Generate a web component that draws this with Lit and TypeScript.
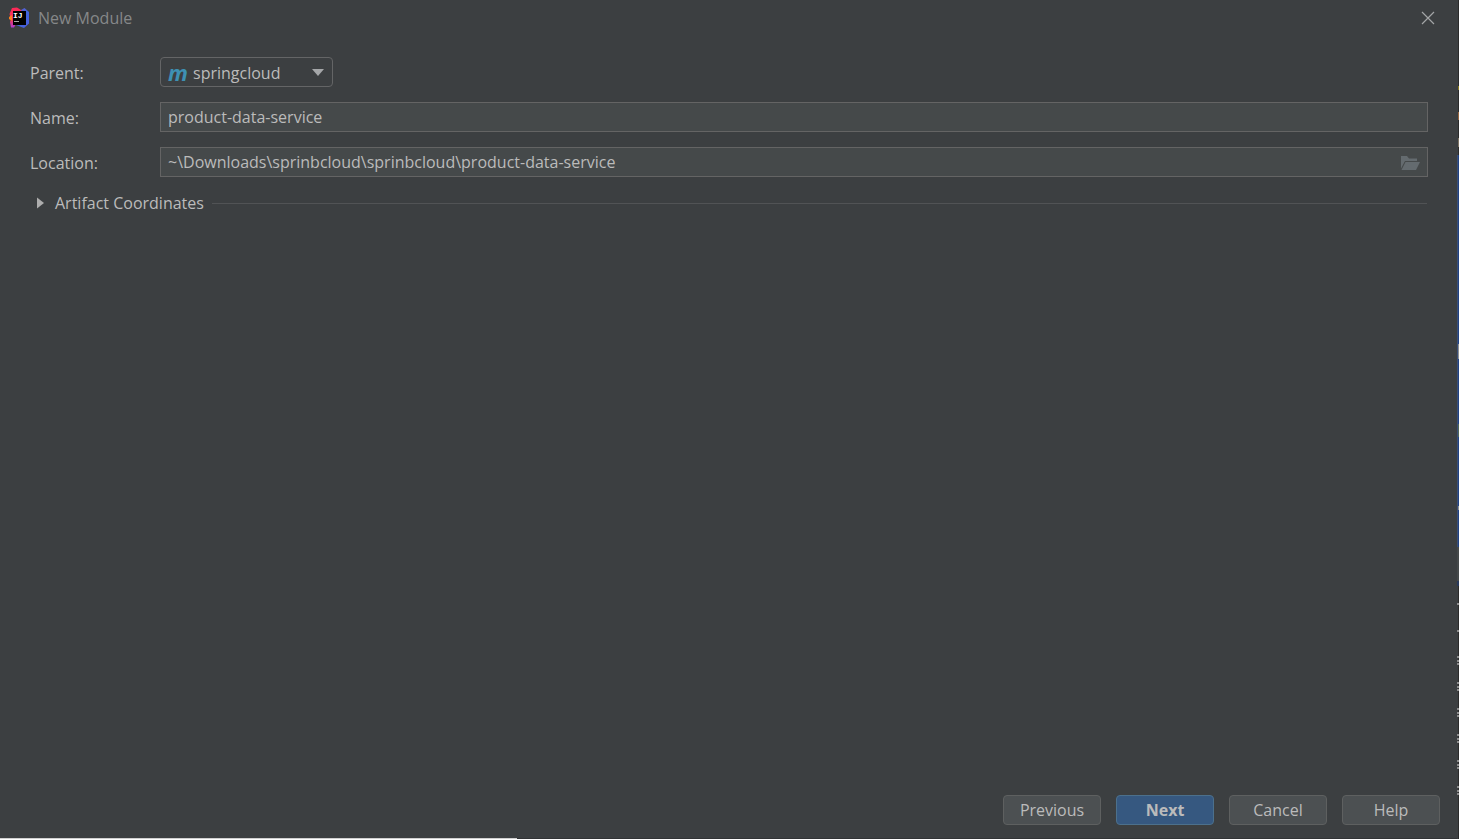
import { LitElement, html, css, svg } from "lit";
import { customElement, state } from "lit/decorators.js";

const logo = svg`
  <svg class="logo" viewBox="0 0 22 22" aria-hidden="true">
    <defs>
      <linearGradient id="blue" x1="0" y1="0" x2="1" y2="1">
        <stop offset="0" stop-color="#7a55b8" />
        <stop offset="0.5" stop-color="#3f66dd" />
        <stop offset="1" stop-color="#4a5be0" />
      </linearGradient>
      <linearGradient id="pink" x1="0" y1="0" x2="0" y2="1">
        <stop offset="0" stop-color="#fe2857" />
        <stop offset="0.6" stop-color="#f0355c" />
        <stop offset="1" stop-color="#b03bd0" />
      </linearGradient>
    </defs>
    <path fill="url(#blue)" d="M13 3 16.500 1 21 5v11.500L16 21 8 18z" />
    <path fill="url(#pink)" d="M4 1 9 0.500l4 2.500 1 3-6 11-2 3.500H3L2 15l1-3-1.500-5z" />
    <path fill="#fc801d" d="M1 10 4 8v6l-3-2z" />
    <rect x="5" y="4" width="13" height="14" fill="#000" />
    <text x="5" y="11" fill="#fff" font-size="8" font-weight="700" font-family="Liberation Mono, monospace">IJ</text>
    <rect x="6" y="14" width="5" height="1" fill="#aaa" />
  </svg>`;

@customElement("app-root")
export class AppRoot extends LitElement {
  @state() private expanded = false;

  static styles = css`
    :host {
      display: grid;
      grid-template-columns: minmax(0, 1fr) 2px;
      min-height: 100vh;
      background: #3c3f41;
      color: #bbbbbb;
      font: 16px/22px "Open Sans", "Noto Sans", sans-serif;
    }
    * {
      box-sizing: border-box;
    }
    button,
    input,
    select {
      font: inherit;
      color: inherit;
      margin: 0;
    }
    svg {
      display: block;
      flex: none;
    }
    .dialog {
      display: flex;
      flex-direction: column;
    }
    .titlebar {
      display: flex;
      align-items: center;
      height: 36px;
      padding: 0 22px 0 8px;
      color: #868889;
    }
    .logo {
      width: 22px;
      height: 22px;
    }
    .title {
      flex: 1;
      margin: 0 0 0 8px;
      font-size: 16px;
      font-weight: 400;
    }
    .close {
      padding: 0;
      border: 0;
      background: none;
      color: #a3a5a6;
    }
    .form {
      display: grid;
      grid-template-columns: 130px minmax(0, 1fr);
      row-gap: 15px;
      align-items: center;
      padding: 21px 29px 0 30px;
    }
    .form label {
      padding-top: 2px;
    }
    .combo {
      display: grid;
      grid-template-columns: 32px 1fr 28px;
      align-items: center;
      width: 173px;
    }
    .combo select {
      grid-area: 1 / 1 / 2 / 4;
      width: 100%;
      height: 30px;
      padding: 2px 28px 0 32px;
      appearance: none;
      border: 1px solid #646566;
      border-radius: 4px;
      background: #3c3f41;
    }
    .maven {
      grid-area: 1 / 1;
      z-index: 1;
      padding-left: 8px;
      color: #3e91b3;
      font: italic 700 22px/22px "Open Sans", sans-serif;
      pointer-events: none;
    }
    .arrow {
      grid-area: 1 / 3;
      z-index: 1;
      margin-left: 7px;
      pointer-events: none;
    }
    .field {
      display: flex;
      align-items: center;
      height: 30px;
      border: 1px solid #646464;
      background: #45494a;
    }
    .field input {
      flex: 1;
      min-width: 0;
      height: 28px;
      padding: 0 7px;
      border: 0;
      outline: 0;
      background: none;
    }
    .browse {
      padding: 2px 7px 0 0;
      border: 0;
      background: none;
    }
    .section {
      display: flex;
      align-items: center;
      padding: 15px 30px 0 36px;
    }
    .disclosure {
      display: flex;
      align-items: center;
      gap: 11px;
      padding: 0;
      border: 0;
      background: none;
    }
    .rule {
      flex: 1;
      height: 1px;
      margin-left: 8px;
      background: #515355;
    }
    .buttons {
      display: flex;
      justify-content: flex-end;
      gap: 15px;
      margin-top: auto;
      padding: 0 17px 13px;
    }
    .button {
      width: 98px;
      height: 30px;
      padding: 0;
      border: 1px solid #5e6060;
      border-radius: 4px;
      background: #4c5052;
    }
    .primary {
      border-color: #4c708c;
      background: #365880;
      font-weight: 700;
    }
    .below {
      height: 1px;
      background: linear-gradient(90deg, #d0d0d0 517px, #323436 517px);
    }
    .behind {
      background:
        linear-gradient(#3c3f41, #3c3f41) 0 0 / 1px 155px no-repeat,
        repeating-linear-gradient(#8d8d8d 0 2px, #0000 2px 4px, #8d8d8d 4px 6px, #0000 6px 7px, #8d8d8d 7px 9px, #0000 9px 26px) 0 656px / 2px 142px no-repeat,
        linear-gradient(#8d8d8d, #8d8d8d) 0 603px / 2px 2px no-repeat,
        linear-gradient(#8d8d8d, #8d8d8d) 0 630px / 2px 2px no-repeat,
        linear-gradient(#3c3f41, #3c3f41) 0 586px / 1px 253px no-repeat,
        linear-gradient(#3b4f75, #3b4f75) 0 155px / 1px 392px no-repeat,
        linear-gradient(
          #2b2b2b 86px, #8a7b20 86px 90px, #2b2b2b 90px 112px, #96653f 112px 120px,
          #2b2b2b 120px 138px, #7d7364 138px 147px, #2b2b2b 147px 155px,
          #214283 155px 344px, #8f9193 344px 359px, #214283 359px 424px,
          #4f6758 424px 437px, #214283 437px 506px, #8f9193 506px 510px, #214283 510px 547px,
          #45494a 547px 581px, #29395a 581px 586px, #2b2b2b 586px
        );
    }
  `;

  render() {
    return html`
      <main class="dialog">
        <header class="titlebar">
          ${logo}
          <h1 class="title">New Module</h1>
          <button class="close" aria-label="Close">
            <svg width="14" height="14" viewBox="0 0 14 14" fill="none" stroke="currentColor" stroke-width="1.2">
              <path d="M1 1 13 13M13 1 1 13" />
            </svg>
          </button>
        </header>
        <div class="form">
          <label for="parent">Parent:</label>
          <div class="combo">
            <select id="parent"><option>springcloud</option></select>
            <span class="maven" aria-hidden="true">m</span>
            <svg class="arrow" width="12" height="7" viewBox="0 0 12 7" fill="#a5a7a9">
              <path d="M0 0H12L6 7z" />
            </svg>
          </div>
          <label for="name">Name:</label>
          <div class="field"><input id="name" .value=${"product-data-service"} /></div>
          <label for="location">Location:</label>
          <div class="field">
            <input id="location" .value=${"~\\Downloads\\sprinbcloud\\sprinbcloud\\product-data-service"} />
            <button class="browse" aria-label="Browse">
              <svg width="20" height="16" viewBox="0 0 20 16" fill="#646b6f">
                <path d="M1 1H7L9 3.500H17V6H5L1 13.500z" />
                <path d="M5.500 7H20L16 15H1.500z" />
              </svg>
            </button>
          </div>
        </div>
        <div class="section">
          <button class="disclosure" aria-expanded=${this.expanded} @click=${() => (this.expanded = !this.expanded)}>
            <svg width="8" height="12" viewBox="0 0 8 12" fill="#adadad"><path d="M1 0.500V11.500L8 6z" /></svg>
            Artifact Coordinates
          </button>
          <span class="rule"></span>
        </div>
        <footer class="buttons">
          <button class="button">Previous</button>
          <button class="button primary">Next</button>
          <button class="button">Cancel</button>
          <button class="button">Help</button>
        </footer>
        <div class="below"></div>
      </main>
      <div class="behind"></div>
    `;
  }
}
